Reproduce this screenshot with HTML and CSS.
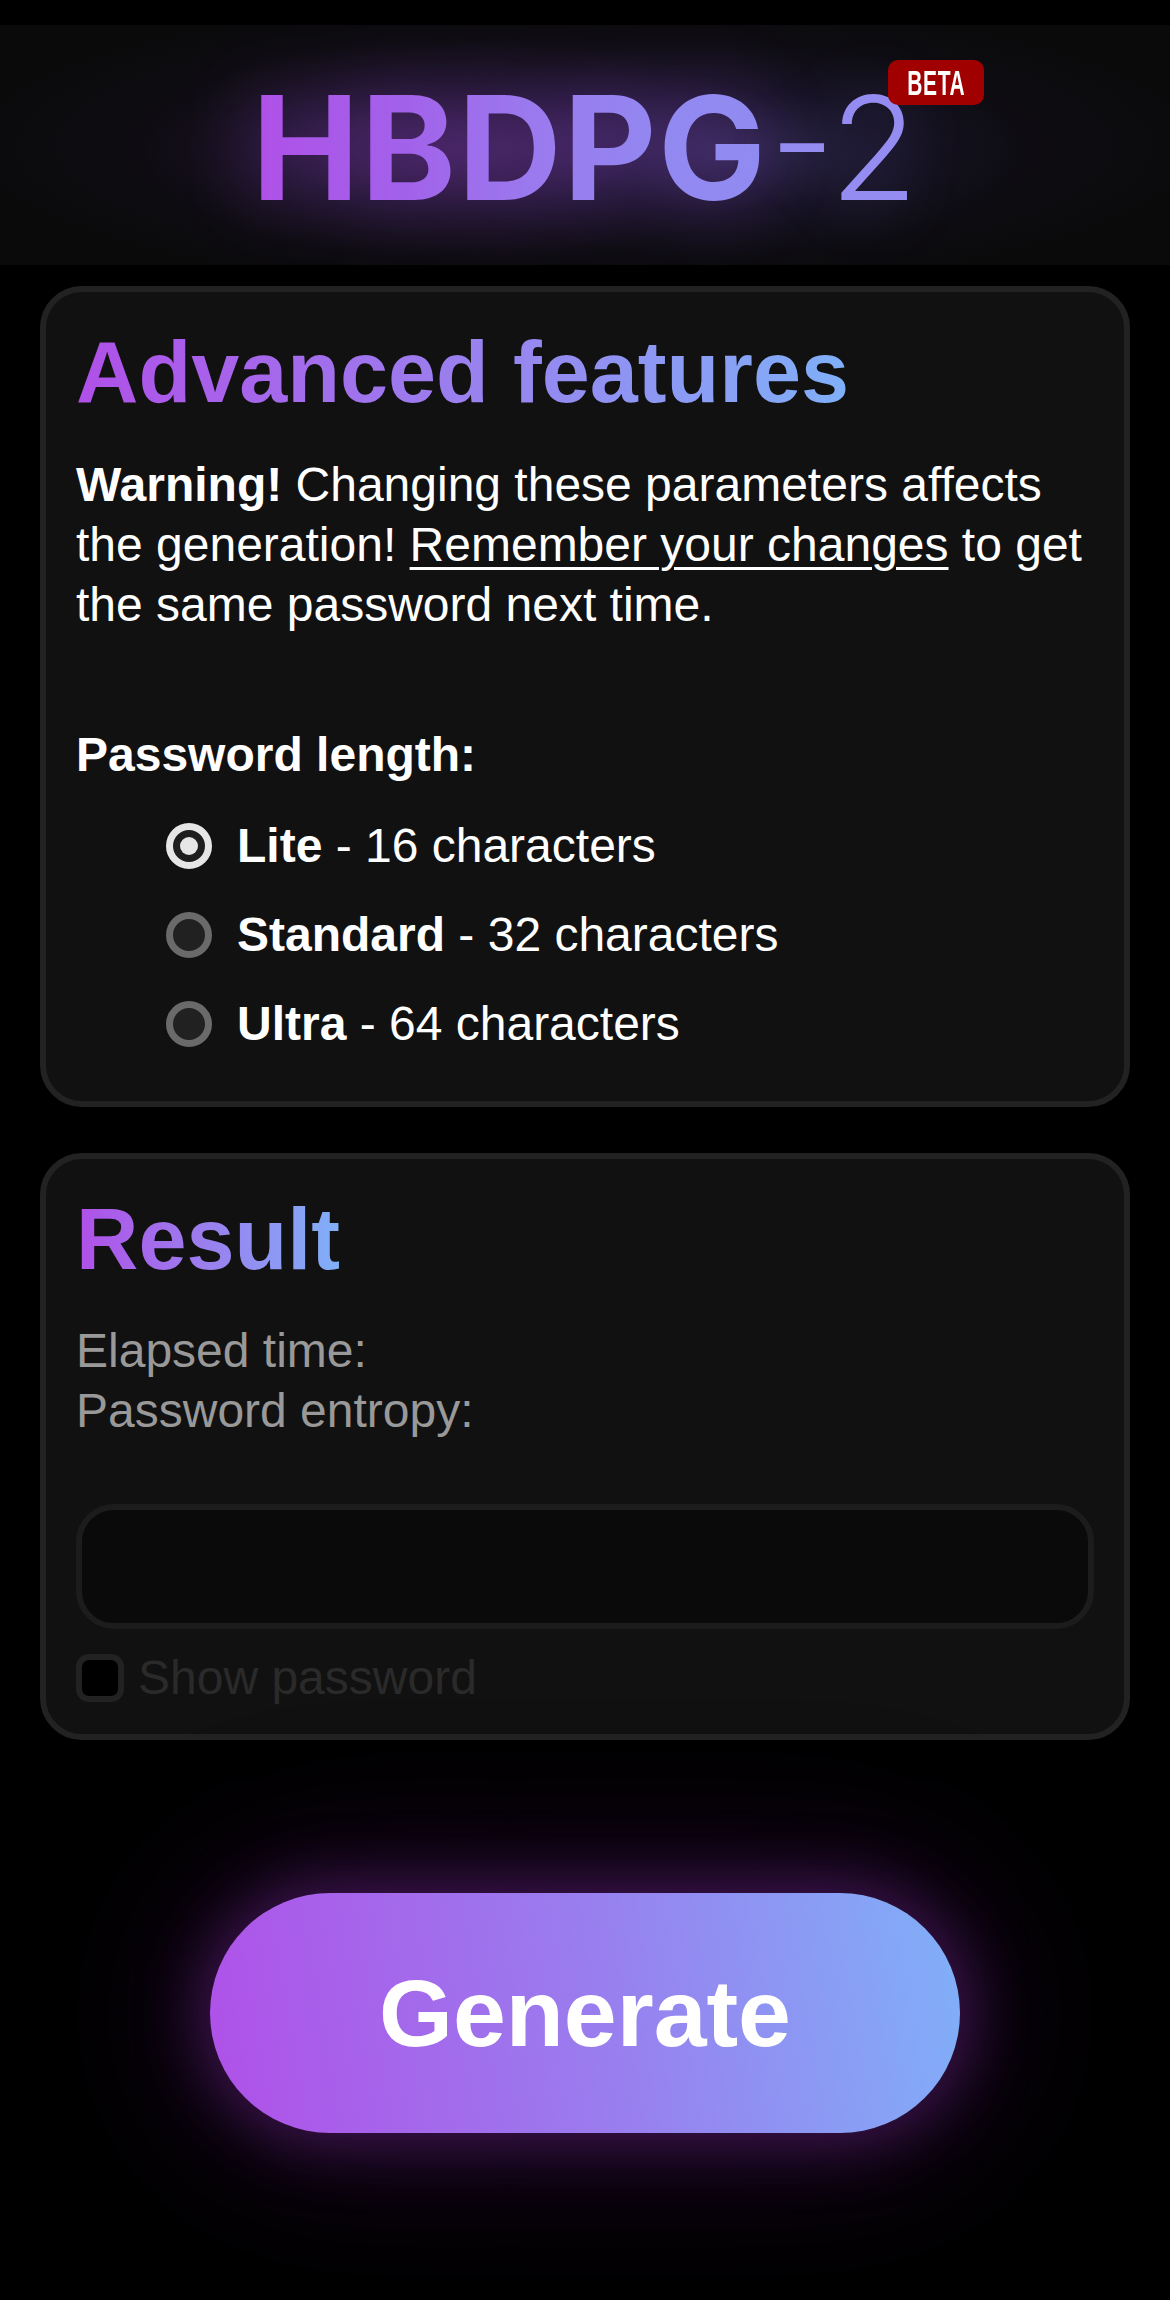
FILE: index.html
```html
<!DOCTYPE html>
<html lang="en">
<head>
<meta charset="utf-8">
<title>HBDPG-2</title>
<link rel="stylesheet" href="styles.css">
</head>
<body>
<div class="page">
  <header class="hero">
    <h1 class="title"><span class="title-bold">HBDPG</span><span class="title-light">-2</span><span class="beta"><span class="beta-text">BETA</span></span></h1>
  </header>
  <main class="main">
    <section class="card card-adv">
      <h2 class="card-title"><span class="grad">Advanced features</span></h2>
      <p class="warn"><strong>Warning!</strong> Changing these parameters affects the generation! <u>Remember your changes</u> to get the same password next time.</p>
      <p class="label">Password length:</p>
      <div class="radios">
        <div class="radio-row"><span class="radio checked"></span><span><strong>Lite</strong> - 16 characters</span></div>
        <div class="radio-row"><span class="radio"></span><span><strong>Standard</strong> - 32 characters</span></div>
        <div class="radio-row"><span class="radio"></span><span><strong>Ultra</strong> - 64 characters</span></div>
      </div>
    </section>
    <section class="card card-result">
      <h2 class="card-title"><span class="grad">Result</span></h2>
      <div class="info">
        <div>Elapsed time:</div>
        <div>Password entropy:</div>
      </div>
      <div class="output"></div>
      <div class="check-row"><span class="checkbox"></span><span class="check-label">Show password</span></div>
    </section>
    <div class="btn-wrap">
      <div class="generate">Generate</div>
    </div>
  </main>
</div>
</body>
</html>
```
FILE: styles.css
```css
html, body {
  margin: 0;
  padding: 0;
  background: #000;
}
body {
  font-family: "Liberation Sans", Arial, sans-serif;
  color: #fff;
  width: 1170px;
}
.page {
  padding-top: 25px;
  min-height: 2300px;
  box-sizing: border-box;
}
.hero {
  height: 240px;
  display: flex;
  align-items: center;
  justify-content: center;
  background:
    radial-gradient(ellipse 330px 110px at 40% 52%, rgba(80, 36, 110, 0.5) 0%, rgba(60, 30, 90, 0.22) 55%, rgba(0,0,0,0) 100%),
    radial-gradient(ellipse 300px 110px at 62% 52%, rgba(60, 55, 110, 0.5) 0%, rgba(40, 35, 80, 0.22) 55%, rgba(0,0,0,0) 100%),
    radial-gradient(ellipse 620px 150px at 50% 50%, rgba(30, 22, 45, 0.7) 0%, rgba(10, 10, 14, 0) 100%),
    #0a0a0b;
}
.title {
  position: relative;
  margin: 0;
  font-family: Inter, "Liberation Sans", sans-serif;
  font-size: 144px;
  line-height: 1;
  letter-spacing: 1.5px;
  display: flex;
  align-items: baseline;
  margin-top: 6px;
}
.title-bold {
  font-weight: 700;
  background: linear-gradient(90deg, #b050e8 0%, #a262ea 30%, #9a7aee 55%, #9288f1 80%, #908cf1 100%);
  -webkit-background-clip: text;
  background-clip: text;
  color: transparent;
  filter: drop-shadow(0 0 36px rgba(160, 80, 230, 0.45));
}
.title-light {
  font-weight: 300;
  color: #948cf0;
  margin-left: 2px;
  letter-spacing: 0;
  filter: drop-shadow(0 0 30px rgba(130, 110, 230, 0.35));
}
.beta {
  position: absolute;
  right: -66px;
  top: -16px;
  width: 96px;
  height: 45px;
  background: #a00000;
  border-radius: 10px;
  display: flex;
  align-items: center;
  justify-content: center;
}
.beta-text {
  font-family: "Liberation Sans", Arial, sans-serif;
  font-size: 35px;
  line-height: 1;
  color: #fff;
  letter-spacing: 1px;
  transform: scaleX(0.6);
  display: inline-block;
}
.main {
  padding: 21px 40px 0;
  display: flex;
  flex-direction: column;
}
.card {
  border: 6px solid #222;
  border-radius: 42px;
  background: #111;
  padding: 31px 30px 30px;
}
.card-adv {
  padding-bottom: 47px;
  margin-bottom: 46px;
}
.card-result {
  padding-bottom: 26px;
}
.card-title {
  margin: 0 0 33px;
  font-size: 86.4px;
  font-weight: 700;
  line-height: 99px;
}
.grad {
  display: inline-block;
  background: linear-gradient(90deg, #b050e8 0%, #9a80ee 50%, #80b0f8 100%);
  -webkit-background-clip: text;
  background-clip: text;
  color: transparent;
}
.warn {
  margin: 0;
  font-size: 48px;
  line-height: 60px;
}
.warn u {
  text-decoration-thickness: 3px;
  text-underline-offset: 6px;
}
.label {
  margin: 90px 0 0;
  font-size: 48px;
  line-height: 60px;
  font-weight: 700;
}
.radios {
  margin-top: 31px;
  padding-left: 90px;
  display: flex;
  flex-direction: column;
  gap: 29px;
}
.radio-row {
  display: flex;
  align-items: center;
  gap: 25px;
  font-size: 48px;
  line-height: 60px;
}
.radio {
  box-sizing: border-box;
  width: 46px;
  height: 46px;
  border-radius: 50%;
  border: 7px solid #6a6a6a;
  background: #212121;
  flex: none;
  display: flex;
  align-items: center;
  justify-content: center;
}
.radio.checked {
  border-color: #e6e6e6;
  background: #1e1e1e;
}
.radio.checked::after {
  content: "";
  width: 18px;
  height: 18px;
  border-radius: 50%;
  background: #e6e6e6;
}
.card-result .card-title {
  margin-bottom: 32px;
}
.info {
  font-size: 48px;
  line-height: 60px;
  color: #999;
}
.output {
  margin-top: 63px;
  box-sizing: border-box;
  height: 125px;
  border: 6px solid #1c1c1c;
  border-radius: 38px;
  background: #0a0a0a;
}
.check-row {
  margin-top: 19px;
  display: flex;
  align-items: center;
  gap: 14px;
  height: 60px;
}
.checkbox {
  box-sizing: border-box;
  width: 48px;
  height: 48px;
  border: 6px solid #222;
  border-radius: 13px;
  background: #000;
  flex: none;
}
.check-label {
  font-size: 48px;
  line-height: 60px;
  color: #2a2a2a;
}
.btn-wrap {
  margin-top: 153px;
  display: flex;
  justify-content: center;
}
.generate {
  width: 750px;
  height: 240px;
  border-radius: 120px;
  background: linear-gradient(80deg, #b050e8 0%, #9a7cee 50%, #80b0f8 100%);
  box-shadow: 0 0 60px 10px rgba(110, 35, 140, 0.5), 0 0 140px 40px rgba(70, 20, 90, 0.35);
  display: flex;
  align-items: center;
  justify-content: center;
  font-size: 95px;
  font-weight: 700;
  color: #fff;
}
```
